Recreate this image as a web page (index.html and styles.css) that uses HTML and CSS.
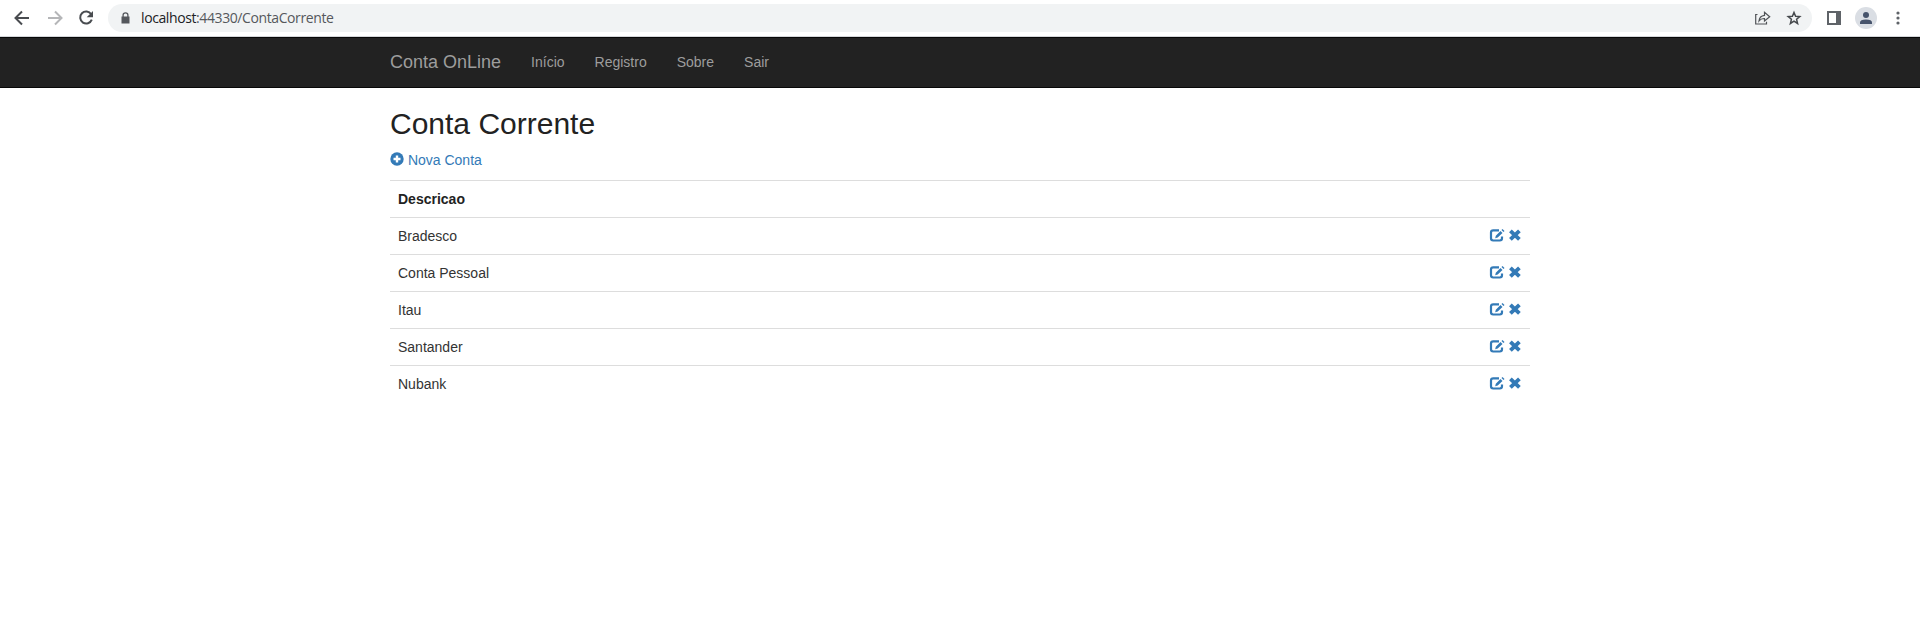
FILE: index.html
```
<!DOCTYPE html>
<html lang="pt-BR">
<head>
<meta charset="utf-8">
<title>Conta Corrente</title>
<link rel="stylesheet" href="styles.css">
</head>
<body>
<svg class="defs" aria-hidden="true">
  <symbol id="edit" viewBox="0 0 14 14" overflow="visible"><path d="M9 1.3H3.2Q1 1.3 1 3.5V9.3Q1 11.5 3.2 11.5H9.8Q12 11.5 12 9.3V7.6" fill="none" stroke="currentColor" stroke-width="2.2"/><path d="M5.2 9.2L5.8 6.7L10.5 2L12.5 4L7.7 8.6ZM11.5 1L12.5 0L14.5 2L13.5 3Z" fill="currentColor"/></symbol>
  <symbol id="remove" viewBox="0 0 14 14" overflow="visible"><path d="M2.4 1.8L11.4 10.4M11.4 1.8L2.4 10.4" fill="none" stroke="currentColor" stroke-width="3.9"/></symbol>
</svg>
<header class="browser">
  <svg class="nav-icon" viewBox="0 0 16 16"><path d="M15 8H2M8 1.5L1.5 8L8 14.5" fill="none" stroke="#494c50" stroke-width="2"/></svg>
  <svg class="nav-icon forward" viewBox="0 0 16 16"><path d="M1 8H14M8 1.5L14.5 8L8 14.5" fill="none" stroke="#b5b6b8" stroke-width="2"/></svg>
  <svg class="nav-icon reload" viewBox="0 0 16 16"><path d="M13.2 4.2A6 6 0 1 0 13.8 9.7" fill="none" stroke="#494c50" stroke-width="2"/><path d="M15 1V7.3H8.7Z" fill="#494c50"/></svg>
  <div class="address">
    <svg class="lock" viewBox="0 0 9 12"><path d="M.5 4.5H8.5V11.5H.5Z" fill="#54575c"/><path d="M2.1 5V3A2.4 2.2 0 0 1 6.9 3V5" fill="none" stroke="#54575c" stroke-width="1.3"/></svg>
    <span class="url"><span class="host">localhost</span>:44330/ContaCorrente</span>
    <svg class="share" viewBox="0 0 16 14"><path d="M2.5 3.5H.7V13H11.5V10.7M4 10Q4.5 5 9.5 4.4V1.4L14.7 5.8L9.5 10V7.5Q6 7.3 4 10Z" fill="none" stroke="#505357" stroke-width="1.2"/></svg>
    <svg class="star" viewBox="0 0 14 14"><path d="M7 1.5L8.6 5.3L12.8 5.6L9.6 8.3L10.6 12.5L7 10.2L3.4 12.5L4.4 8.3L1.2 5.6L5.4 5.3Z" fill="none" stroke="#45484c" stroke-width="1.5"/></svg>
  </div>
  <svg class="panel" viewBox="0 0 14 14"><path d="M0 0H14V14H0ZM2 2V12H9V2Z" fill="#5f6368" fill-rule="evenodd"/></svg>
  <svg class="avatar" viewBox="0 0 22 22"><circle cx="11" cy="11" r="11" fill="#dadee4"/><circle cx="11" cy="8" r="3" fill="#46536b"/><path d="M5 17V15.4Q5 12.4 11 12.4T17 15.4V17Z" fill="#46536b"/></svg>
  <svg class="dots" viewBox="0 0 4 14"><g fill="#5f6368"><circle cx="2" cy="2" r="1.6"/><circle cx="2" cy="7" r="1.6"/><circle cx="2" cy="12" r="1.6"/></g></svg>
</header>
<nav class="navbar">
  <div class="container">
    <a class="brand">Conta OnLine</a>
    <a class="link">Início</a><a class="link">Registro</a><a class="link">Sobre</a><a class="link">Sair</a>
  </div>
</nav>
<main class="content">
  <h2>Conta Corrente</h2>
  <p><a><svg class="glyph" viewBox="0 0 14 14"><circle cx="7" cy="6" r="6.7" fill="currentColor"/><path d="M7 2.5V9.5M3.5 6H10.5" stroke="#fff" stroke-width="2.4"/></svg> Nova Conta</a></p>
  <table>
    <tr><th>Descricao</th><th></th></tr>
    <tr><td>Bradesco</td><td class="actions"><a><svg class="glyph"><use href="#edit"/></svg></a> <a><svg class="glyph"><use href="#remove"/></svg></a></td></tr>
    <tr><td>Conta Pessoal</td><td class="actions"><a><svg class="glyph"><use href="#edit"/></svg></a> <a><svg class="glyph"><use href="#remove"/></svg></a></td></tr>
    <tr><td>Itau</td><td class="actions"><a><svg class="glyph"><use href="#edit"/></svg></a> <a><svg class="glyph"><use href="#remove"/></svg></a></td></tr>
    <tr><td>Santander</td><td class="actions"><a><svg class="glyph"><use href="#edit"/></svg></a> <a><svg class="glyph"><use href="#remove"/></svg></a></td></tr>
    <tr><td>Nubank</td><td class="actions"><a><svg class="glyph"><use href="#edit"/></svg></a> <a><svg class="glyph"><use href="#remove"/></svg></a></td></tr>
  </table>
</main>
</body>
</html>
```
FILE: styles.css
```
* { box-sizing: border-box; }
body { margin: 0; background: #fff; color: #333; font: 14px/20px "Liberation Sans", Arial, sans-serif; }
svg { flex: none; overflow: visible; }
.defs { display: none; }
.browser { display: flex; align-items: center; height: 37px; padding: 0 20px 0 14px; border-bottom: 1px solid #d5d7da; background: #fff; }
.nav-icon { width: 16px; height: 16px; }
.forward { margin-left: 17px; }
.reload { margin-left: 15px; }
.address { display: flex; align-items: center; flex: 1; height: 28px; margin-left: 14px; padding: 0 11px 0 13px; border-radius: 14px; background: #f1f3f4; }
.lock { width: 9px; height: 12px; }
.url { flex: 1; margin-left: 11px; color: #55585c; font: 14px/20px "Open Sans", sans-serif; letter-spacing: -.4px; }
.host { color: #202124; }
.share { width: 16px; height: 14px; }
.star { width: 14px; height: 14px; margin-left: 16px; }
.panel { width: 14px; height: 14px; margin-left: 15px; }
.avatar { width: 22px; height: 22px; margin-left: 14px; }
.dots { width: 4px; height: 14px; margin-left: 19px; }
.navbar { height: 51px; border: solid #080808; border-width: 1px 0; background: #222; color: #9d9d9d; }
.container { display: flex; width: 1170px; margin: 0 auto; }
.brand { padding: 14px 15px 15px; font-size: 18px; }
.link { padding: 14px 15px 15px; }
.content { width: 1140px; margin: 0 auto; }
h2 { margin: 19px 0 10px; color: #222; font-size: 30px; line-height: 33px; font-weight: 400; }
p { margin: 0 0 10px; }
a { text-decoration: none; }
p a, .actions a { color: #337ab7; }
.glyph { width: 14px; height: 14px; vertical-align: -2px; }
table { width: 100%; border-collapse: separate; border-spacing: 0; }
th, td { height: 37px; padding: 8px; border-top: 1px solid #ddd; text-align: left; vertical-align: top; }
th { color: #222; }
.actions { text-align: right; }
```
